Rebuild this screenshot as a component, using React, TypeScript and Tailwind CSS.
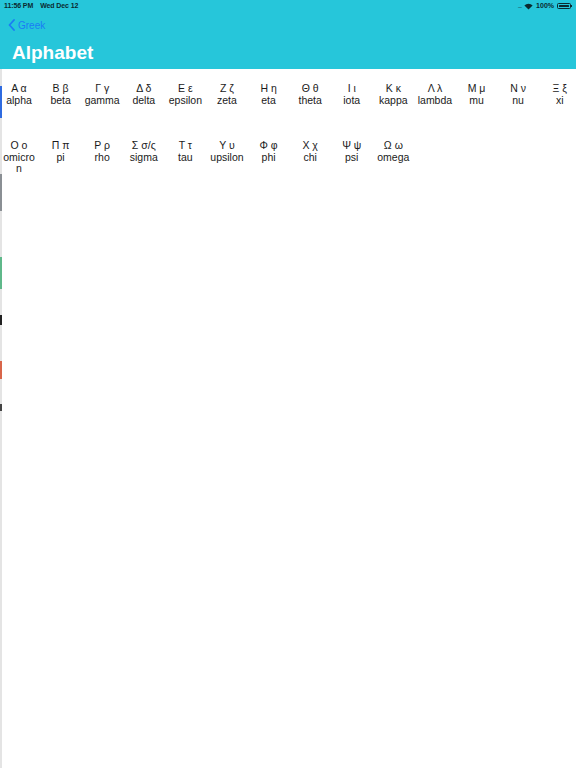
import React from 'react';

const letters: [string, string][] = [
  ['Α α', 'alpha'], ['Β β', 'beta'], ['Γ γ', 'gamma'], ['Δ δ', 'delta'], ['Ε ε', 'epsilon'],
  ['Ζ ζ', 'zeta'], ['Η η', 'eta'], ['Θ θ', 'theta'], ['Ι ι', 'iota'], ['Κ κ', 'kappa'],
  ['Λ λ', 'lambda'], ['Μ μ', 'mu'], ['Ν ν', 'nu'], ['Ξ ξ', 'xi'], ['Ο ο', 'omicron'],
  ['Π π', 'pi'], ['Ρ ρ', 'rho'], ['Σ σ/ς', 'sigma'], ['Τ τ', 'tau'], ['Υ υ', 'upsilon'],
  ['Φ φ', 'phi'], ['Χ χ', 'chi'], ['Ψ ψ', 'psi'], ['Ω ω', 'omega'],
];

const App: React.FC = () => {
  return (
    <div className="w-[576px] h-[768px] bg-white overflow-hidden flex flex-col font-['Liberation_Sans',Arial,sans-serif]">
      {/* Nav bar */}
      <div className="bg-[#26c6da] h-[69px] shrink-0 flex flex-col">
        <div className="h-[12px] flex items-center justify-between px-[4px] text-[7px] font-bold text-[#0b2a30]">
          <div className="flex gap-[7px] tracking-[-0.1px]">
            <span>11:56 PM</span>
            <span>Wed Dec 12</span>
          </div>
          <div className="flex items-center gap-[3px]">
            <span className="text-[#1d7f8c] tracking-[-1px] text-[6px]">.....</span>
            <svg width="9" height="7" viewBox="0 0 12 9">
              <path d="M6 8.5L0.5 3a7.8 7.8 0 0 1 11 0z" fill="#0b2a30" />
            </svg>
            <span>100%</span>
            <div className="flex items-center">
              <div className="w-[14px] h-[6px] rounded-[1.5px] border border-[#0b2a30] p-[1px]">
                <div className="w-full h-full bg-[#0b2a30] rounded-[0.5px]" />
              </div>
              <div className="w-[1px] h-[2px] bg-[#0b2a30]" />
            </div>
          </div>
        </div>
        <div className="h-[26px] flex items-center pl-[8px] gap-[3px] text-[#1a7cf5] text-[10px]">
          <svg width="7" height="12" viewBox="0 0 7 12">
            <path d="M6 1L1.5 6 6 11" stroke="#1a7cf5" strokeWidth="1.8" fill="none" strokeLinecap="round" strokeLinejoin="round" />
          </svg>
          <span>Greek</span>
        </div>
        <div className="pl-[12px] pt-[3px] text-white font-bold text-[19px] leading-[24px]">Alphabet</div>
      </div>

      {/* Content */}
      <div className="flex flex-1">
        <div className="w-[2px] shrink-0 bg-[#e4e4e4] flex flex-col">
          <div className="h-[17px]" />
          <div className="h-[32px] bg-[#2f6be0]" />
          <div className="h-[56px]" />
          <div className="h-[37px] bg-[#8a8f94]" />
          <div className="h-[46px]" />
          <div className="h-[32px] bg-[#5fb88a]" />
          <div className="h-[26px]" />
          <div className="h-[10px] bg-[#222]" />
          <div className="h-[36px]" />
          <div className="h-[18px] bg-[#d8654a]" />
          <div className="h-[25px]" />
          <div className="h-[7px] bg-[#444]" />
        </div>
        <div className="flex-1 -ml-[1px] pt-[14px]">
          <div className="grid grid-cols-[repeat(14,36px)] gap-x-[5.6px] gap-y-[22px]">
            {letters.map(([g, n]) => (
              <div key={n} className="h-[35px] text-center text-[10.5px] leading-[11.5px] text-[#1a1a1a] break-all">
                <div>{g}</div>
                <div>{n}</div>
              </div>
            ))}
          </div>
        </div>
      </div>
    </div>
  );
};

export default App;
